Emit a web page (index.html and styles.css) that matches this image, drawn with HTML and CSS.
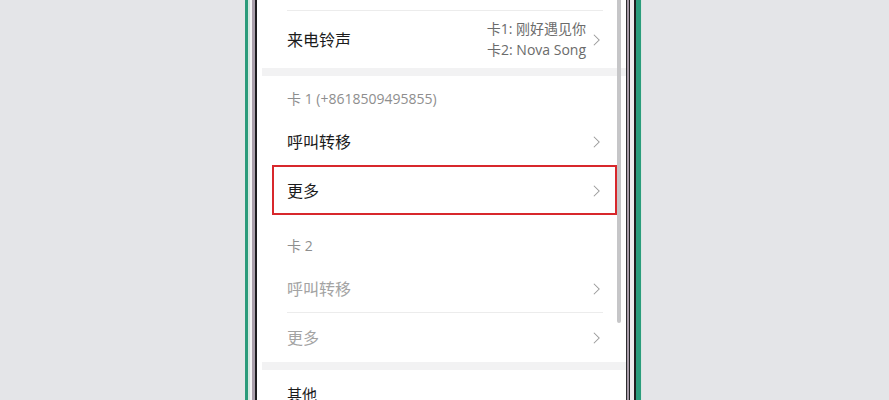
FILE: index.html
```html
<!DOCTYPE html>
<html lang="zh-CN">
<head>
<meta charset="utf-8">
<title>通话设置</title>
<link rel="stylesheet" href="styles.css">
</head>
<body>
<div class="stage">
  <div class="edge edge-left"></div>
  <div class="screen">
    <div class="scrollbar"></div>
    <div class="group">
      <div class="top-rest"></div>
      <div class="row">
        <span class="label">来电铃声</span>
        <span class="value"><span>卡1: 刚好遇见你</span><span>卡2: Nova Song</span></span>
        <svg class="chev" viewBox="0 0 8 14"><path d="M1 1 L7 7 L1 13"/></svg>
      </div>
    </div>
    <div class="band"></div>
    <div class="group">
      <div class="header">卡 1 (+8618509495855)</div>
      <div class="row sep"><span class="label">呼叫转移</span><svg class="chev" viewBox="0 0 8 14"><path d="M1 1 L7 7 L1 13"/></svg></div>
      <div class="row highlighted"><span class="label">更多</span><svg class="chev" viewBox="0 0 8 14"><path d="M1 1 L7 7 L1 13"/></svg><div class="mark"></div></div>
      <div class="header header-next">卡 2</div>
      <div class="row sep disabled"><span class="label">呼叫转移</span><svg class="chev" viewBox="0 0 8 14"><path d="M1 1 L7 7 L1 13"/></svg></div>
      <div class="row disabled"><span class="label">更多</span><svg class="chev" viewBox="0 0 8 14"><path d="M1 1 L7 7 L1 13"/></svg></div>
    </div>
    <div class="band"></div>
    <div class="group">
      <div class="header header-dark">其他</div>
    </div>
  </div>
  <div class="edge edge-right"></div>
</div>
</body>
</html>
```
FILE: styles.css
```css
html, body {
  margin: 0;
  padding: 0;
  background: #e4e5e8;
  height: 400px;
  overflow: hidden;
}
body {
  font-family: "Open Sans", "Noto Sans CJK SC", sans-serif;
}
.stage {
  display: flex;
  padding-left: 245px;
  height: 400px;
}
.edge {
  height: 400px;
  flex: none;
}
.edge-left {
  width: 17px;
  background: linear-gradient(to right,
    #2b9b7b 0, #2b9b7b 3px,
    #d6e9e2 3px, #d6e9e2 5px,
    #f3f3f4 5px, #f3f3f4 7px,
    #a99fab 7px, #a99fab 10px,
    #1d1d1f 10px, #1d1d1f 12px,
    #ffffff 12px);
}
.edge-right {
  width: 16px;
  background: linear-gradient(to right,
    #2e2e30 0, #2e2e30 1px,
    #a89ba8 1px, #a89ba8 3px,
    #232325 3px, #232325 4px,
    #eeecee 4px, #eeecee 8px,
    #1e1e20 8px, #1e1e20 10px,
    #2a9c7c 10px, #2a9c7c 15px,
    #d9e6e1 15px);
}
.screen {
  position: relative;
  width: 364px;
  flex: none;
  background: #f2f2f3;
  height: 400px;
  overflow: hidden;
}
.scrollbar {
  position: absolute;
  left: 355px;
  top: 0;
  width: 4px;
  height: 323px;
  background: #c6c6c8;
  border-radius: 0 0 2px 2px;
  z-index: 2;
}
.group {
  background: #ffffff;
}
.top-rest {
  height: 10px;
  margin: 0 23px 0 25px;
  border-bottom: 1px solid #ececec;
}
.band {
  height: 8px;
}
.row {
  position: relative;
  display: flex;
  align-items: center;
  height: 49px;
  padding: 0 26px 0 25px;
  box-sizing: border-box;
}
.top-rest + .row {
  height: 57px;
}
.row.sep::after {
  content: "";
  position: absolute;
  left: 25px;
  right: 23px;
  bottom: 0;
  border-bottom: 1px solid #ececec;
}
.label {
  flex: 1;
  font-size: 16px;
  color: #1b1b1b;
  line-height: 20px;
}
.disabled .label {
  color: #a3a3a3;
}
.value {
  display: flex;
  flex-direction: column;
  align-items: flex-end;
  font-size: 14px;
  line-height: 21px;
  color: #6b6b6b;
  margin-right: 7px;
  margin-top: -1px;
}
.chev {
  width: 7px;
  height: 14px;
  flex: none;
  fill: none;
  stroke: #9a9a9a;
  stroke-width: 1.2;
}
.header {
  font-size: 14px;
  line-height: 20px;
  color: #8e8e8e;
  padding: 13px 25px 8px;
}
.header-next {
  padding-top: 21px;
}
.header-dark {
  color: #1b1b1b;
  font-size: 15px;
  padding-top: 14px;
}
.mark {
  position: absolute;
  left: 10px;
  right: 9px;
  top: -1px;
  bottom: 0;
  border: 2px solid #d8282c;
}
```
